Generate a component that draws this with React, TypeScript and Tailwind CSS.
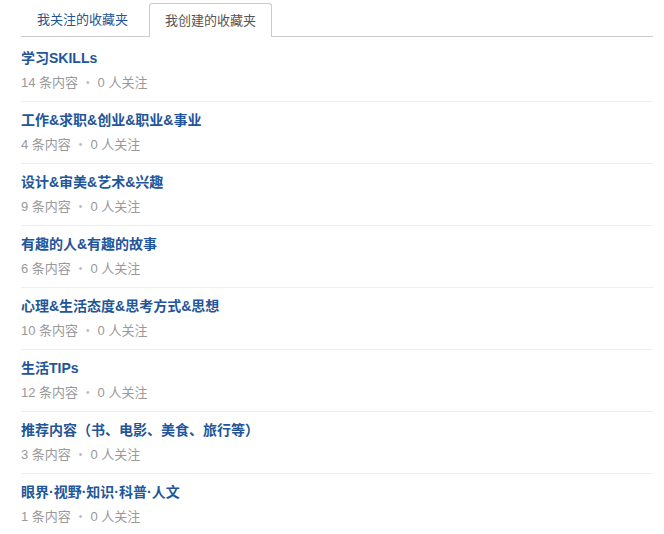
import React from 'react';

const folders = [
  { name: '学习SKILLs', count: 14, followers: 0 },
  { name: '工作&求职&创业&职业&事业', count: 4, followers: 0 },
  { name: '设计&审美&艺术&兴趣', count: 9, followers: 0 },
  { name: '有趣的人&有趣的故事', count: 6, followers: 0 },
  { name: '心理&生活态度&思考方式&思想', count: 10, followers: 0 },
  { name: '生活TIPs', count: 12, followers: 0 },
  { name: '推荐内容（书、电影、美食、旅行等）', count: 3, followers: 0 },
  { name: '眼界·视野·知识·科普·人文', count: 1, followers: 0 },
];

export default function App() {
  return (
    <div
      className="w-[664px] h-[534px] bg-white overflow-hidden pl-[21px] pr-[11px] pt-[4px]"
      style={{ fontFamily: '"Liberation Sans", Arial, "Noto Sans CJK SC", sans-serif' }}
    >
      {/* Tabs */}
      <div className="flex items-end border-b border-[#ccc] h-[33px]">
        <button className="h-[33px] px-[16px] mr-[5px] text-[13px] text-[#225599]">
          我关注的收藏夹
        </button>
        <button className="h-[34px] -mb-px px-[15px] text-[13px] text-[#555] bg-white border border-b-0 border-[#ccc] rounded-t-[3px]">
          我创建的收藏夹
        </button>
      </div>

      {/* Folder list */}
      <div className="pt-[3px]">
        {folders.map((f, i) => (
          <div
            key={f.name}
            className={`pt-[8px] pb-[8px] ${i < folders.length - 1 ? 'border-b border-[#eee]' : ''}`}
          >
            <div className="text-[14px] leading-[20px] font-bold text-[#225599]">{f.name}</div>
            <div className="mt-[5px] text-[13px] leading-[20px] text-[#999] flex items-center">
              <span>{f.count} 条内容</span>
              <span className="mx-[8px] text-[10px] text-[#bbb]">•</span>
              <span>{f.followers} 人关注</span>
            </div>
          </div>
        ))}
      </div>
    </div>
  );
}
